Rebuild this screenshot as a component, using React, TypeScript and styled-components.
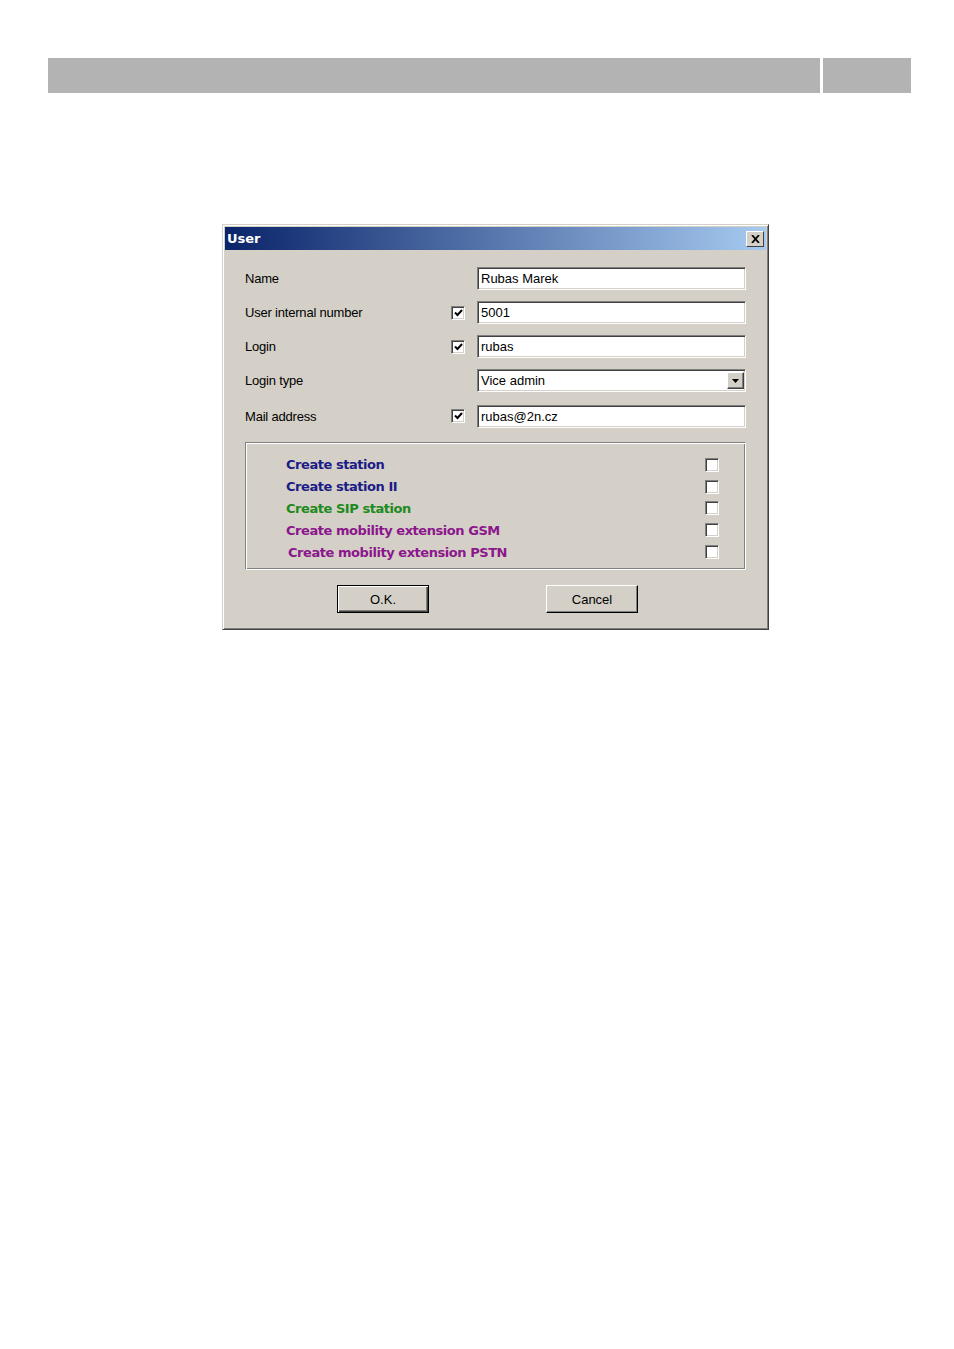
import styled, { createGlobalStyle } from "styled-components";

const GlobalStyle = createGlobalStyle`
  body {
    margin: 0;
    background: #ffffff;
    font-family: "Liberation Sans", Arial, sans-serif;
  }
`;

const Page = styled.div`
  padding: 58px 43px 0 48px;
  min-height: 1291px;
`;

const HeaderBar = styled.div`
  display: flex;
  gap: 3px;
  height: 35px;
`;

const HeaderBlock = styled.div<{ $width?: number }>`
  background: #b3b3b3;
  flex: ${(p) => (p.$width ? `0 0 ${p.$width}px` : "1")};
`;

const Dialog = styled.div`
  margin: 131px 0 0 174px;
  width: 547px;
  height: 406px;
  box-sizing: border-box;
  background: #d4d0c8;
  border: 1px solid #d4d0c8;
  border-right-color: #404040;
  border-bottom-color: #404040;
  box-shadow: inset 1px 1px #ffffff, inset -1px -1px #808080;
  padding: 2px;
  display: flex;
  flex-direction: column;
`;

const TitleBar = styled.div`
  height: 23px;
  display: flex;
  align-items: center;
  justify-content: space-between;
  padding: 0 2px 0 2px;
  background: linear-gradient(to right, #0a246a, #a6caf0);
`;

const Title = styled.span`
  color: #ffffff;
  font-weight: bold;
  font-size: 13px;
  font-family: "DejaVu Sans", Tahoma, sans-serif;
`;

const CloseButton = styled.div`
  width: 18px;
  height: 16px;
  box-sizing: border-box;
  background: #d4d0c8;
  border: 1px solid #ffffff;
  border-right-color: #404040;
  border-bottom-color: #404040;
  display: flex;
  align-items: center;
  justify-content: center;
`;

const Body = styled.div`
  flex: 1;
  padding: 17px 20px 0 20px;
  display: flex;
  flex-direction: column;
`;

const FormGrid = styled.div`
  display: grid;
  grid-template-columns: 206px 26px 269px;
  grid-auto-rows: 23px;
  row-gap: 11px;
  align-items: center;
`;

const Label = styled.div<{ $shift?: number }>`
  font-size: 13px;
  color: #000000;
  margin-top: ${(p) => p.$shift ?? 0}px;
  letter-spacing: -0.2px;
`;

const Cell = styled.div<{ $shift?: number }>`
  margin-top: ${(p) => p.$shift ?? 0}px;
  display: flex;
  align-items: center;
`;

const Field = styled.div`
  height: 23px;
  width: 100%;
  box-sizing: border-box;
  background: #ffffff;
  border: 1px solid #808080;
  border-right-color: #ffffff;
  border-bottom-color: #ffffff;
  box-shadow: inset 1px 1px #404040, inset -1px -1px #d4d0c8;
  padding: 0 4px 0 3px;
  display: flex;
  align-items: center;
  justify-content: space-between;
  font-size: 13px;
  color: #000000;
`;

const DropButton = styled.div`
  width: 17px;
  height: 17px;
  box-sizing: border-box;
  background: #d4d0c8;
  border: 1px solid #ffffff;
  border-right-color: #404040;
  border-bottom-color: #404040;
  box-shadow: inset -1px -1px #808080;
  display: flex;
  align-items: center;
  justify-content: center;
  margin-right: -3px;
`;

const Box = styled.div`
  width: 14px;
  height: 14px;
  box-sizing: border-box;
  background: #ffffff;
  border: 1px solid #808080;
  border-right-color: #ffffff;
  border-bottom-color: #ffffff;
  box-shadow: inset 1px 1px #404040, inset -1px -1px #d4d0c8;
  display: flex;
  align-items: center;
  justify-content: center;
`;

const Group = styled.div`
  margin-top: 16px;
  height: 128px;
  box-sizing: border-box;
  border: 1px solid #808080;
  border-right-color: #ffffff;
  border-bottom-color: #ffffff;
  box-shadow: inset 1px 1px #ffffff, inset -1px -1px #808080;
  padding: 11px 26px 6px 40px;
  display: flex;
  flex-direction: column;
`;

const OptionRow = styled.div`
  height: 22px;
  display: flex;
  align-items: center;
  justify-content: space-between;
`;

const OptionLabel = styled.span<{ $color: string; $indent?: number }>`
  color: ${(p) => p.$color};
  font-family: "DejaVu Sans", Tahoma, sans-serif;
  font-weight: bold;
  font-size: 13px;
  letter-spacing: -0.45px;
  padding-left: ${(p) => p.$indent ?? 0}px;
`;

const ButtonRow = styled.div`
  display: flex;
  justify-content: center;
  gap: 117px;
  margin-top: 15px;
  padding-right: 16px;
`;

const Button = styled.div<{ $default?: boolean }>`
  width: 92px;
  height: 28px;
  box-sizing: border-box;
  background: #d4d0c8;
  border: 1px solid ${(p) => (p.$default ? "#000000" : "#ffffff")};
  border-right-color: #000000;
  border-bottom-color: #000000;
  box-shadow: ${(p) =>
    p.$default
      ? "inset 1px 1px #ffffff, inset -1px -1px #404040, inset -2px -2px #808080"
      : "inset -1px -1px #808080"};
  display: flex;
  align-items: center;
  justify-content: center;
  font-size: 13px;
  color: #000000;
`;

const Check = ({ checked }: { checked?: boolean }) => (
  <Box>
    {checked && (
      <svg width="9" height="8" viewBox="0 0 9 8">
        <path d="M1 3.5 L3.5 6 L8 1" stroke="#000" strokeWidth="2" fill="none" />
      </svg>
    )}
  </Box>
);

const options = [
  { text: "Create station", color: "#1c1c86" },
  { text: "Create station II", color: "#1c1c86" },
  { text: "Create SIP station", color: "#1e8a1e" },
  { text: "Create mobility extension GSM", color: "#8c168c" },
  { text: "Create mobility extension PSTN", color: "#8c168c", indent: 2 },
];

const App = () => {
  return (
    <Page>
      <GlobalStyle />
      <HeaderBar>
        <HeaderBlock />
        <HeaderBlock $width={88} />
      </HeaderBar>

      <Dialog>
        <TitleBar>
          <Title>User</Title>
          <CloseButton>
            <svg width="9" height="8" viewBox="0 0 9 8">
              <path d="M1 0 L8 8 M8 0 L1 8" stroke="#000" strokeWidth="1.8" />
            </svg>
          </CloseButton>
        </TitleBar>

        <Body>
          <FormGrid>
            <Label>Name</Label>
            <Cell />
            <Cell>
              <Field>Rubas Marek</Field>
            </Cell>

            <Label>User internal number</Label>
            <Cell>
              <Check checked />
            </Cell>
            <Cell>
              <Field>5001</Field>
            </Cell>

            <Label>Login</Label>
            <Cell>
              <Check checked />
            </Cell>
            <Cell>
              <Field>rubas</Field>
            </Cell>

            <Label>Login type</Label>
            <Cell />
            <Cell>
              <Field>
                Vice admin
                <DropButton>
                  <svg width="7" height="4" viewBox="0 0 7 4">
                    <path d="M0 0 H7 L3.5 4 Z" fill="#000" />
                  </svg>
                </DropButton>
              </Field>
            </Cell>

            <Label $shift={3}>Mail address</Label>
            <Cell $shift={3}>
              <Check checked />
            </Cell>
            <Cell $shift={3}>
              <Field>rubas@2n.cz</Field>
            </Cell>
          </FormGrid>

          <Group>
            {options.map((o) => (
              <OptionRow key={o.text}>
                <OptionLabel $color={o.color} $indent={o.indent}>
                  {o.text}
                </OptionLabel>
                <Check />
              </OptionRow>
            ))}
          </Group>

          <ButtonRow>
            <Button $default>O.K.</Button>
            <Button>Cancel</Button>
          </ButtonRow>
        </Body>
      </Dialog>
    </Page>
  );
};

export default App;
